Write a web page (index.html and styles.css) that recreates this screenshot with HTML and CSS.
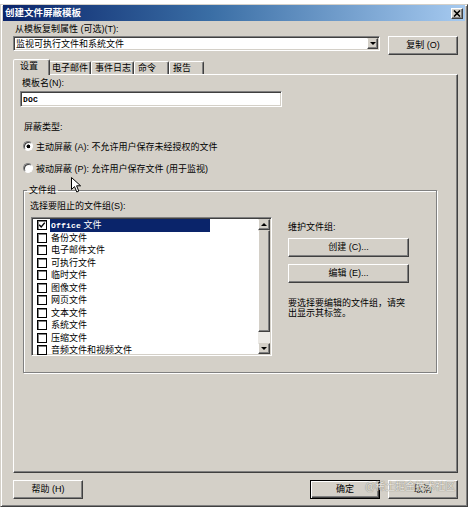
FILE: index.html
```html
<!DOCTYPE html>
<html lang="zh-CN">
<head>
    <meta charset="UTF-8">
    <title>创建文件屏蔽模板</title>
    <link rel="stylesheet" href="styles.css">
</head>
<body>

    <div class="strip"></div>

    <section class="window">
        <div class="titlebar">
            <span class="title">创建文件屏蔽模板</span>
            <span class="close">
                <svg width="8" height="7" viewBox="0 0 8 7"><path d="M1 0.5 L7 6.5 M7 0.5 L1 6.5" stroke="#000" stroke-width="1.6"/></svg>
            </span>
        </div>

        <div class="content">
            <div class="copy-label">从模板复制属性 (可选)(T):</div>
            <div class="copy-row">
                <div class="combo">
                    <span>监视可执行文件和系统文件</span>
                    <span class="drop"></span>
                </div>
                <button class="btn">复制 (O)</button>
            </div>

            <ul class="tabs">
                <li class="on">设置</li>
                <li>电子邮件</li>
                <li>事件日志</li>
                <li>命令</li>
                <li>报告</li>
            </ul>

            <div class="panel">
                <div class="name-label">模板名(N):</div>
                <div class="input"><span class="mono">DOC</span></div>

                <div class="type-label">屏蔽类型:</div>
                <div class="radio r1"><i class="dot on"></i>主动屏蔽 (A): 不允许用户保存未经授权的文件</div>
                <div class="radio r2"><i class="dot"></i>被动屏蔽 (P): 允许用户保存文件 (用于监视)</div>

                <fieldset class="group">
                    <legend>文件组</legend>
                    <div class="pick-label">选择要阻止的文件组(S):</div>
                    <div class="group-row">
                        <div class="list">
                            <ul class="items">
                                <li class="sel"><i class="box"><svg width="8" height="8" viewBox="0 0 8 8"><path d="M1.2 3.8 L3.2 6 L6.8 1.6" fill="none" stroke="#000" stroke-width="1.4"/></svg></i><span class="txt"><span class="mono">Office</span> 文件</span></li>
                                <li><i class="box"></i><span class="txt">备份文件</span></li>
                                <li><i class="box"></i><span class="txt">电子邮件文件</span></li>
                                <li><i class="box"></i><span class="txt">可执行文件</span></li>
                                <li><i class="box"></i><span class="txt">临时文件</span></li>
                                <li><i class="box"></i><span class="txt">图像文件</span></li>
                                <li><i class="box"></i><span class="txt">网页文件</span></li>
                                <li><i class="box"></i><span class="txt">文本文件</span></li>
                                <li><i class="box"></i><span class="txt">系统文件</span></li>
                                <li><i class="box"></i><span class="txt">压缩文件</span></li>
                                <li><i class="box"></i><span class="txt">音频文件和视频文件</span></li>
                            </ul>
                            <div class="scroll">
                                <span class="arrow up"></span>
                                <span class="thumb"></span>
                                <span class="track"></span>
                                <span class="arrow down"></span>
                            </div>
                        </div>
                        <div class="side">
                            <div>维护文件组:</div>
                            <button class="btn wide create">创建 (C)...</button>
                            <button class="btn wide edit">编辑 (E)...</button>
                            <p class="note">要选择要编辑的文件组，请突出显示其标签。</p>
                        </div>
                    </div>
                </fieldset>
            </div>

            <div class="footer">
                <button class="btn">帮助 (H)</button>
                <button class="btn default">确定</button>
                <button class="btn">取消</button>
            </div>
        </div>

        <div class="watermark">@稀土掘金技术社区</div>

        <svg class="cursor" width="12" height="17" viewBox="0 0 12 17">
            <path d="M0.5 0.5 L0.5 12.5 L3.5 9.6 L5.8 15 L7.8 14.1 L5.6 8.8 L9.6 8.8 Z" fill="#fff" stroke="#000" stroke-width="1"/>
        </svg>
    </section>

</body>
</html>
```

FILE: styles.css
```css
html,body {
	margin:0;
	padding:0;
}
body {
	width:468px;
	height:507px;
	overflow:hidden;
	background:#fff;
	color:#000;
	font-family:"Liberation Sans","Noto Sans CJK SC",sans-serif;
	font-size:9px;
}
.strip {
	height:4px;
}
.mono {
	font-family:"Liberation Mono","Noto Sans CJK SC",monospace;
	font-size:8px;
	font-weight:bold;
	letter-spacing:0.2px;
}

/* window frame */
.window {
	position:relative;
	box-sizing:border-box;
	height:503px;
	padding:0 2px;
	background:#d4d0c8;
	border:1px solid;
	border-color:#d4d0c8 #404040 #404040 #d4d0c8;
	box-shadow:inset 1px 1px #fff, inset -1px -1px #808080;
}
.titlebar {
	height:16px;
	display:flex;
	align-items:center;
	justify-content:space-between;
	padding:0 2px;
	background:linear-gradient(to right, #0a246a, #3a6ea5 45%, #a6caf0);
}
.title {
	color:#fff;
	font-weight:bold;
	font-size:9.5px;
	line-height:12px;
}
.close {
	box-sizing:border-box;
	width:12px;
	height:11px;
	display:flex;
	align-items:center;
	justify-content:center;
	background:#d4d0c8;
	border:1px solid;
	border-color:#fff #404040 #404040 #fff;
	box-shadow:inset -1px -1px #808080;
}

.content {
	padding:0 7px 0 10px;
}

/* common controls */
.btn {
	box-sizing:border-box;
	width:70px;
	height:19px;
	padding:0;
	margin:0;
	background:#d4d0c8;
	color:#000;
	font:inherit;
	line-height:15px;
	border:1px solid;
	border-color:#fff #404040 #404040 #fff;
	box-shadow:inset -1px -1px #808080;
	outline:none;
}
.btn.default {
	border-color:#000;
	box-shadow:inset 1px 1px #fff, inset -1px -1px #404040, inset -2px -2px #808080;
}
.sunken {
	border:1px solid;
}

.copy-label {
	margin:2px 0 0 2px;
	line-height:12px;
}
.copy-row {
	display:flex;
	align-items:flex-start;
	gap:8px;
	margin-top:1px;
}
.combo {
	box-sizing:border-box;
	width:367px;
	height:15px;
	display:flex;
	align-items:center;
	padding-left:2px;
	background:#fff;
	line-height:12px;
	border:1px solid;
	border-color:#808080 #fff #fff #808080;
	box-shadow:inset 1px 1px #404040, inset -1px -1px #d4d0c8;
}
.drop {
	box-sizing:border-box;
	width:11px;
	height:11px;
	margin-left:auto;
	margin-right:1px;
	display:flex;
	align-items:center;
	justify-content:center;
	background:#d4d0c8;
	border:1px solid;
	border-color:#d4d0c8 #404040 #404040 #fff;
	box-shadow:inset -1px -1px #808080;
}
.drop:after,
.arrow:after {
	content:"";
	border-left:3px solid transparent;
	border-right:3px solid transparent;
	border-top:3px solid #000;
}

/* tabs */
.tabs {
	display:flex;
	align-items:flex-end;
	height:15px;
	margin:4px 0 0 2px;
	padding:0;
	list-style:none;
}
.tabs li {
	box-sizing:border-box;
	min-width:35px;
	height:13px;
	padding:0 2px 0 3px;
	line-height:12px;
	background:#d4d0c8;
	border:1px solid;
	border-bottom:none;
	border-color:#fff #404040 transparent #fff;
	box-shadow:inset -1px 0 #808080;
	border-radius:2px 2px 0 0;
}
.tabs li.on {
	position:relative;
	z-index:2;
	width:37px;
	height:16px;
	margin:0 -2px -1px;
	padding-left:6px;
	line-height:13px;
}

.panel {
	box-sizing:border-box;
	height:399px;
	background:#d4d0c8;
	border:1px solid;
	border-color:#fff #404040 #404040 #fff;
	box-shadow:inset -1px -1px #808080;
}
.name-label {
	margin:2px 0 0 8px;
	line-height:12px;
}
.input {
	box-sizing:border-box;
	width:262px;
	height:16px;
	margin:2px 0 0 6px;
	padding-left:2px;
	line-height:14px;
	background:#fff;
	border:1px solid;
	border-color:#808080 #fff #fff #808080;
	box-shadow:inset 1px 1px #404040, inset -1px -1px #d4d0c8;
}
.type-label {
	margin:14px 0 0 10px;
	line-height:12px;
}
.radio {
	display:flex;
	align-items:center;
	height:12px;
	margin-left:9px;
}
.r1 {
	margin-top:7px;
}
.r2 {
	margin-top:10px;
}
.dot {
	box-sizing:border-box;
	width:10px;
	height:10px;
	margin-right:3px;
	border-radius:50%;
	background:#fff;
	border:1px solid;
	border-color:#808080 #fff #fff #808080;
	box-shadow:inset 1px 1px #404040;
}
.dot.on {
	background:radial-gradient(circle at 55% 55%, #000 0, #000 1.6px, #fff 2.2px);
}

/* file group */
.group {
	margin:10px 20px 0 9px;
	padding:0 0 16px;
	min-width:0;
	border:1px solid #808080;
	box-shadow:inset 1px 1px #fff, 1px 1px #fff;
}
.group legend {
	margin-left:3px;
	padding:0 2px;
	line-height:12px;
}
.pick-label {
	margin:4px 0 0 6px;
	line-height:12px;
}
.group-row {
	display:flex;
	align-items:flex-start;
	margin-top:5px;
}
.list {
	box-sizing:border-box;
	width:241px;
	height:139px;
	margin-left:7px;
	display:flex;
	background:#fff;
	border:1px solid;
	border-color:#808080 #fff #fff #808080;
	box-shadow:inset 1px 1px #404040, inset -1px -1px #d4d0c8;
	padding:1px;
}
.items {
	flex:1;
	margin:0;
	padding:0 0 0 4px;
	list-style:none;
}
.items li {
	display:flex;
	align-items:center;
	height:12.5px;
}
.box {
	box-sizing:border-box;
	flex:none;
	width:10px;
	height:10px;
	margin-right:3px;
	display:flex;
	align-items:center;
	justify-content:center;
	background:#fff;
	border:1px solid #000;
	box-shadow:inset 1px 1px #808080;
}
.txt {
	box-sizing:border-box;
	padding:0 1px;
	line-height:12px;
}
.items li.sel .txt {
	width:160px;
	background:#0a246a;
	color:#fff;
}
.scroll {
	width:12px;
	display:flex;
	flex-direction:column;
}
.arrow,
.thumb {
	box-sizing:border-box;
	display:flex;
	align-items:center;
	justify-content:center;
	background:#d4d0c8;
	border:1px solid;
	border-color:#d4d0c8 #404040 #404040 #fff;
	box-shadow:inset -1px -1px #808080;
}
.arrow {
	height:11px;
}
.arrow.up:after {
	border-top:none;
	border-bottom:3px solid #000;
}
.thumb {
	height:102px;
}
.track {
	flex:1;
	background:#ebe9e5;
}
.side {
	width:121px;
	margin-left:16px;
	padding-top:4px;
	line-height:12px;
}
.side .create {
	margin-top:5px;
}
.side .edit {
	margin-top:7px;
}
.wide {
	width:121px;
}
.note {
	margin:16px 0 0;
	line-height:9.5px;
}

.footer {
	display:flex;
	gap:8px;
	margin-top:7px;
}
.footer .default {
	margin-left:auto;
}

/* overlays */
.watermark {
	position:absolute;
	left:364px;
	top:476px;
	font-size:10px;
	line-height:12px;
	color:#e6e4de;
	text-shadow:0 0 1px #8d8a83, 0 0 1px #8d8a83;
}
.cursor {
	position:absolute;
	left:70px;
	top:172px;
}
```
